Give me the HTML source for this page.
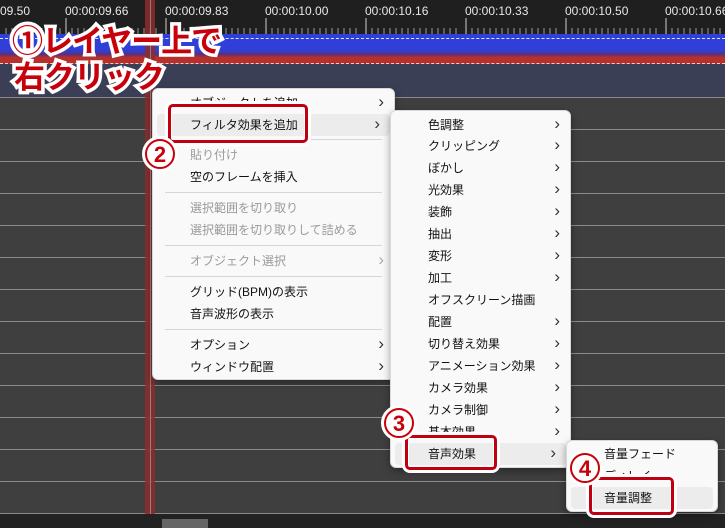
<!DOCTYPE html>
<html><head><meta charset="utf-8"><style>
*{margin:0;padding:0;box-sizing:border-box}
html,body{width:725px;height:528px;overflow:hidden}
body{background:#3f3f3f;position:relative;font-family:"Liberation Sans","Noto Sans CJK JP",sans-serif}
.abs{position:absolute}
.ruler{left:0;top:0;width:725px;height:34px;background:#1f1f1f}
.lbl{top:4px;color:#e8e8e8;font-size:12px}
.rowl{left:0;width:725px;height:1px;background:#8a8a8a}
.menu{background:#f9f9f9;border:1px solid #d8d8d8;border-radius:6px;box-shadow:0 3px 8px rgba(0,0,0,.35)}
.it{position:absolute;left:0;right:0;height:22px;font-size:12px;color:#111;line-height:22px}
.it span.a{position:absolute;right:10px;top:0;color:#333;font-size:17px;line-height:20px}
.dis{color:#9a9a9a}
.hl{background:#ececec;border-radius:4px;left:4px;right:4px}
.sep{position:absolute;left:12px;right:12px;height:1px;background:#d6d6d6}
.big{font-weight:bold;color:#c8000a;font-size:31px;-webkit-text-stroke:7px #fff;paint-order:stroke fill;line-height:34px;letter-spacing:-1px}
.circ{width:36px;height:36px;border-radius:50%;background:#fff;border:3px solid #fff}
.circ div{width:100%;height:100%;border-radius:50%;border:2px solid #c8000a;color:#c8000a;font-weight:bold;font-size:22px;text-align:center;line-height:27px}
.box{border:3px solid #c00010;border-radius:5px;box-shadow:0 0 0 3px #fff, inset 0 0 0 1px #fff}
</style></head><body>
<div class="abs ruler"></div>
<div class="abs lbl" style="left:0">09.50</div>
<div class="abs lbl" style="left:65px">00:00:09.66</div>
<div class="abs lbl" style="left:165px">00:00:09.83</div>
<div class="abs lbl" style="left:265px">00:00:10.00</div>
<div class="abs lbl" style="left:365px">00:00:10.16</div>
<div class="abs lbl" style="left:465px">00:00:10.33</div>
<div class="abs lbl" style="left:565px">00:00:10.50</div>
<div class="abs lbl" style="left:665px">00:00:10.66</div>
<svg class="abs" style="left:0;top:18px" width="725" height="16">
<g stroke="#cfcfcf" stroke-width="1">
<path d="M66 0V16M166 0V16M266 0V16M366 0V16M466 0V16M566 0V16M666 0V16"/>
</g>
<g stroke="#9a9a9a"><path d="M6 10V16M12 10V16M18 10V16M24 10V16M30 10V16M36 10V16M42 10V16M48 10V16M54 10V16M60 10V16M72 10V16M78 10V16M84 10V16M90 10V16M96 10V16M102 10V16M108 10V16M114 10V16M120 10V16M126 10V16M132 10V16M138 10V16M144 10V16M150 10V16M156 10V16M172 10V16M178 10V16M184 10V16M190 10V16M196 10V16M202 10V16M208 10V16M214 10V16M220 10V16M226 10V16M232 10V16M238 10V16M244 10V16M250 10V16M256 10V16M272 10V16M278 10V16M284 10V16M290 10V16M296 10V16M302 10V16M308 10V16M314 10V16M320 10V16M326 10V16M332 10V16M338 10V16M344 10V16M350 10V16M356 10V16M372 10V16M378 10V16M384 10V16M390 10V16M396 10V16M402 10V16M408 10V16M414 10V16M420 10V16M426 10V16M432 10V16M438 10V16M444 10V16M450 10V16M456 10V16M472 10V16M478 10V16M484 10V16M490 10V16M496 10V16M502 10V16M508 10V16M514 10V16M520 10V16M526 10V16M532 10V16M538 10V16M544 10V16M550 10V16M556 10V16M572 10V16M578 10V16M584 10V16M590 10V16M596 10V16M602 10V16M608 10V16M614 10V16M620 10V16M626 10V16M632 10V16M638 10V16M644 10V16M650 10V16M656 10V16M672 10V16M678 10V16M684 10V16M690 10V16M696 10V16M702 10V16M708 10V16M714 10V16M720 10V16"/></g>
</svg>
<div class="abs" style="left:0;top:34px;width:725px;height:30px;background:linear-gradient(#2f3fd8 0,#2f3fd8 55%,#5a2f7a 68%,#b8302c 78%,#b8302c 100%)"></div>
<div class="abs" style="left:0;top:38px;width:725px;border-top:1px dashed #e0e0ff"></div>
<div class="abs" style="left:0;top:63px;width:725px;border-top:1px dashed #f0d0d0"></div>
<div class="abs" style="left:0;top:64px;width:725px;height:33px;background:#3b3f55"></div>
<div class="abs rowl" style="top:97px"></div>
<div class="abs rowl" style="top:129px"></div>
<div class="abs rowl" style="top:161px"></div>
<div class="abs rowl" style="top:193px"></div>
<div class="abs rowl" style="top:225px"></div>
<div class="abs rowl" style="top:257px"></div>
<div class="abs rowl" style="top:289px"></div>
<div class="abs rowl" style="top:321px"></div>
<div class="abs rowl" style="top:353px"></div>
<div class="abs rowl" style="top:385px"></div>
<div class="abs rowl" style="top:417px"></div>
<div class="abs rowl" style="top:449px"></div>
<div class="abs rowl" style="top:481px"></div>
<div class="abs rowl" style="top:513px"></div>
<div class="abs" style="left:145px;top:0;width:10px;height:515px;background:rgba(140,45,45,.85)"></div>
<div class="abs" style="left:150px;top:0;width:1px;height:515px;background:#9a7a80"></div>
<div class="abs" style="left:0;top:514px;width:725px;height:14px;background:#222"></div>
<div class="abs" style="left:162px;top:519px;width:46px;height:9px;background:#666"></div>

<div class="abs menu" style="left:152px;top:88px;width:243px;height:292px">
<div class="it" style="top:3px;padding-left:37px">オブジェクトを追加<span class="a">›</span></div>
<div class="it hl" style="top:25px;padding-left:33px">フィルタ効果を追加<span class="a">›</span></div>
<div class="sep" style="top:50px"></div>
<div class="it dis" style="top:55px;padding-left:37px">貼り付け</div>
<div class="it" style="top:77px;padding-left:37px">空のフレームを挿入</div>
<div class="sep" style="top:103px"></div>
<div class="it dis" style="top:108px;padding-left:37px">選択範囲を切り取り</div>
<div class="it dis" style="top:130px;padding-left:37px">選択範囲を切り取りして詰める</div>
<div class="sep" style="top:156px"></div>
<div class="it dis" style="top:161px;padding-left:37px">オブジェクト選択<span class="a" style="color:#aaa">›</span></div>
<div class="sep" style="top:187px"></div>
<div class="it" style="top:192px;padding-left:37px">グリッド(BPM)の表示</div>
<div class="it" style="top:214px;padding-left:37px">音声波形の表示</div>
<div class="sep" style="top:240px"></div>
<div class="it" style="top:245px;padding-left:37px">オプション<span class="a">›</span></div>
<div class="it" style="top:267px;padding-left:37px">ウィンドウ配置<span class="a">›</span></div>
</div>

<div class="abs menu" style="left:390px;top:110px;width:181px;height:358px">
<div class="it" style="top:3px;padding-left:37px">色調整<span class="a">›</span></div>
<div class="it" style="top:24px;padding-left:37px">クリッピング<span class="a">›</span></div>
<div class="it" style="top:46px;padding-left:37px">ぼかし<span class="a">›</span></div>
<div class="it" style="top:68px;padding-left:37px">光効果<span class="a">›</span></div>
<div class="it" style="top:90px;padding-left:37px">装飾<span class="a">›</span></div>
<div class="it" style="top:112px;padding-left:37px">抽出<span class="a">›</span></div>
<div class="it" style="top:134px;padding-left:37px">変形<span class="a">›</span></div>
<div class="it" style="top:156px;padding-left:37px">加工<span class="a">›</span></div>
<div class="it" style="top:178px;padding-left:37px">オフスクリーン描画</div>
<div class="it" style="top:200px;padding-left:37px">配置<span class="a">›</span></div>
<div class="it" style="top:222px;padding-left:37px">切り替え効果<span class="a">›</span></div>
<div class="it" style="top:244px;padding-left:37px">アニメーション効果<span class="a">›</span></div>
<div class="it" style="top:266px;padding-left:37px">カメラ効果<span class="a">›</span></div>
<div class="it" style="top:288px;padding-left:37px">カメラ制御<span class="a">›</span></div>
<div class="it" style="top:310px;padding-left:37px">基本効果<span class="a">›</span></div>
<div class="it hl" style="top:332px;padding-left:33px">音声効果<span class="a">›</span></div>
</div>

<div class="abs menu" style="left:566px;top:440px;width:152px;height:72px">
<div class="it" style="top:2px;padding-left:37px">音量フェード</div>
<div class="it" style="top:24px;padding-left:37px">ディレイ</div>
<div class="it hl" style="top:46px;padding-left:33px">音量調整</div>
</div>
<svg class="abs" style="left:734px;top:497px" width="12" height="18" viewBox="0 0 12 18"><path d="M1 1V15L4.5 11.5L7 17L9 16L6.5 10.5H11Z" fill="#fff" stroke="#000"/></svg>

<div class="abs box" style="left:168px;top:104px;width:140px;height:39px"></div>
<div class="abs box" style="left:405px;top:435px;width:92px;height:35px"></div>
<div class="abs box" style="left:589px;top:477px;width:85px;height:38px"></div>

<div class="abs big" style="left:12px;top:25px">①レイヤー上で</div>
<div class="abs big" style="left:14px;top:61px">右クリック</div>
<div class="abs circ" style="left:142px;top:136px"><div>2</div></div>
<div class="abs circ" style="left:381px;top:405px"><div>3</div></div>
<div class="abs circ" style="left:567px;top:450px"><div>4</div></div>
</body></html>
